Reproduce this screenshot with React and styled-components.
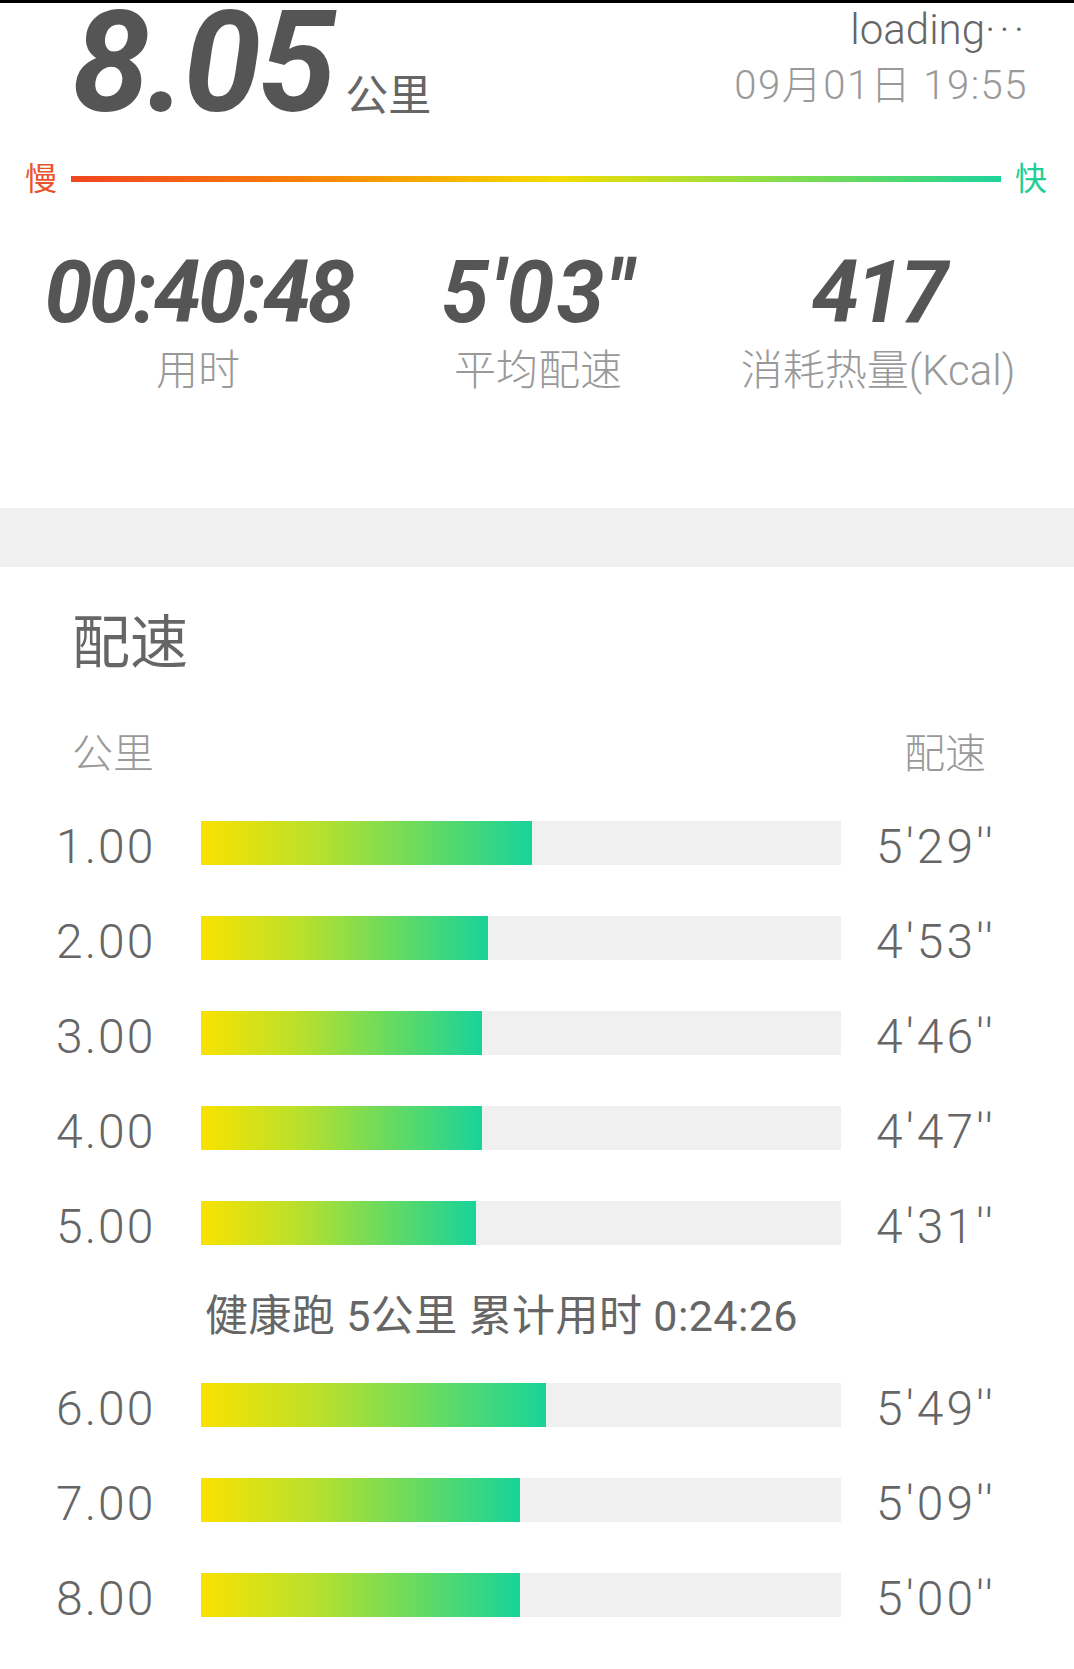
import React from 'react';
import styled, { createGlobalStyle } from 'styled-components';

const GlobalStyle = createGlobalStyle`
  body {
    margin: 0;
    background: #fff;
    font-family: Roboto, "Noto Sans CJK SC", sans-serif;
  }
`;

const Page = styled.div`
  width: 1074px;
  min-height: 1666px;
  border-top: 3px solid #000;
  background: #fff;
  padding-bottom: 27px;
`;

const Header = styled.header`
  display: flex;
  justify-content: space-between;
  align-items: flex-start;
  height: 158px;
  padding: 0 46px 0 72px;
`;

const Distance = styled.div`
  display: flex;
  align-items: baseline;
  gap: 12px;
`;

const BigNumber = styled.span`
  font-size: 140px;
  line-height: 120px;
  font-weight: 700;
  font-style: italic;
  letter-spacing: -3px;
  color: #555;
`;

const Unit = styled.span`
  font-size: 43px;
  color: #666;
`;

const Meta = styled.div`
  display: flex;
  flex-direction: column;
  align-items: flex-end;
  padding-top: 4px;
`;

const Loading = styled.div`
  font-size: 42px;
  line-height: 46px;
  font-weight: 300;
  color: #666;
`;

const Dots = styled.span`
  letter-spacing: 4px;
`;

const DateText = styled.div`
  margin-top: 10px;
  font-size: 40px;
  line-height: 46px;
  font-weight: 300;
  letter-spacing: 1.5px;
  color: #999;
`;

const Scale = styled.div`
  display: flex;
  align-items: center;
  gap: 14px;
  height: 36px;
  padding: 0 27px 0 25px;
`;

const ScaleEnd = styled.span`
  font-size: 32px;
  line-height: 36px;
  color: ${(p) => p.$color};
`;

const ScaleLine = styled.div`
  flex: 1;
  height: 6px;
  background: linear-gradient(
    90deg,
    #f0461f 0%,
    #f7780e 22%,
    #f8b000 40%,
    #f3dc00 52%,
    #b4de2e 66%,
    #6ddb5c 82%,
    #1dd39a 100%
  );
`;

const Stats = styled.section`
  display: grid;
  grid-template-columns: repeat(3, 1fr);
  padding: 53px 26px 116px 28px;
`;

const Stat = styled.div`
  display: flex;
  flex-direction: column;
  align-items: center;
`;

const StatValue = styled.div`
  font-size: 86px;
  line-height: 86px;
  font-weight: 700;
  font-style: italic;
  letter-spacing: ${(p) => p.$spacing || '-3.5px'};
  color: #555;
`;

const StatLabel = styled.div`
  margin-top: 14px;
  font-size: 42px;
  line-height: 42px;
  font-weight: 300;
  color: #999;
`;

const Divider = styled.div`
  height: 59px;
  background: #f0f0f0;
`;

const PaceSection = styled.section`
  padding-top: 47px;
`;

const Title = styled.h2`
  margin: 0;
  padding-left: 72px;
  font-size: 58px;
  line-height: 58px;
  font-weight: 400;
  color: #666;
`;

const TableHead = styled.div`
  display: flex;
  justify-content: space-between;
  margin-top: 62px;
  padding: 0 88px 0 72px;
  font-size: 41px;
  line-height: 41px;
  font-weight: 300;
  color: #999;
`;

const Rows = styled.div`
  margin-top: 20px;
`;

const Row = styled.div`
  display: grid;
  grid-template-columns: 145px 640px 1fr;
  align-items: center;
  height: 95px;
  padding-left: 56px;
`;

const RowText = styled.span`
  margin-top: 9px;
  font-size: 48px;
  line-height: 48px;
  font-weight: 300;
  letter-spacing: ${(p) => (p.$pace ? '3px' : '2px')};
  color: #666;
  padding-left: ${(p) => (p.$pace ? '35px' : '0')};
`;

const Track = styled.div`
  height: 44px;
  background: #f0f0f0;
`;

const Fill = styled.div`
  height: 100%;
  background: linear-gradient(90deg, #f9e200 0%, #b9e02c 35%, #6ddb5c 65%, #18d39a 100%);
`;

const Summary = styled.div`
  height: 81px;
  padding: 6px 0 0 205px;
  font-size: 43px;
  line-height: 81px;
  letter-spacing: 0.4px;
  color: #666;
`;

const splits = [
  { km: '1.00', pace: "5'29''", pct: 51.7 },
  { km: '2.00', pace: "4'53''", pct: 44.9 },
  { km: '3.00', pace: "4'46''", pct: 43.9 },
  { km: '4.00', pace: "4'47''", pct: 43.9 },
  { km: '5.00', pace: "4'31''", pct: 42.9 },
  { km: '6.00', pace: "5'49''", pct: 53.9 },
  { km: '7.00', pace: "5'09''", pct: 49.9 },
  { km: '8.00', pace: "5'00''", pct: 49.9 },
];

function SplitRow({ km, pace, pct }) {
  return (
    <Row>
      <RowText>{km}</RowText>
      <Track>
        <Fill style={{ width: `${pct}%` }} />
      </Track>
      <RowText $pace>{pace}</RowText>
    </Row>
  );
}

export default function App() {
  return (
    <Page>
      <GlobalStyle />
      <Header>
        <Distance>
          <BigNumber>8.05</BigNumber>
          <Unit>公里</Unit>
        </Distance>
        <Meta>
          <Loading>
            loading<Dots>···</Dots>
          </Loading>
          <DateText>09月01日 19:55</DateText>
        </Meta>
      </Header>

      <Scale>
        <ScaleEnd $color="#e8552d">慢</ScaleEnd>
        <ScaleLine />
        <ScaleEnd $color="#1fcf96">快</ScaleEnd>
      </Scale>

      <Stats>
        <Stat>
          <StatValue>00:40:48</StatValue>
          <StatLabel>用时</StatLabel>
        </Stat>
        <Stat>
          <StatValue $spacing="2px">5'03''</StatValue>
          <StatLabel>平均配速</StatLabel>
        </Stat>
        <Stat>
          <StatValue>417</StatValue>
          <StatLabel>消耗热量(Kcal)</StatLabel>
        </Stat>
      </Stats>

      <Divider />

      <PaceSection>
        <Title>配速</Title>
        <TableHead>
          <span>公里</span>
          <span>配速</span>
        </TableHead>
        <Rows>
          {splits.slice(0, 5).map((s) => (
            <SplitRow key={s.km} {...s} />
          ))}
          <Summary>健康跑 5公里 累计用时 0:24:26</Summary>
          {splits.slice(5).map((s) => (
            <SplitRow key={s.km} {...s} />
          ))}
        </Rows>
      </PaceSection>
    </Page>
  );
}
